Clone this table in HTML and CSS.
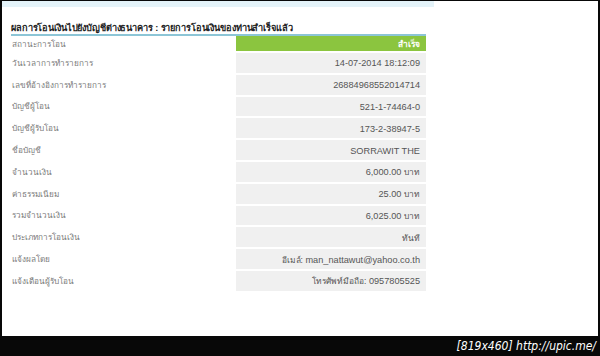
FILE: index.html
```html
<!DOCTYPE html>
<html lang="th">
<head>
<meta charset="utf-8">
<title>ผลการโอนเงิน</title>
<link rel="stylesheet" href="styles.css">
</head>
<body>
<div class="frame">
  <div class="screen">
    <div class="strip"></div>
    <div class="content">
      <h1 class="title">ผลการโอนเงินไปยังบัญชีต่างธนาคาร : รายการโอนเงินของท่านสำเร็จแล้ว</h1>
      <div class="table">
        <div class="label">สถานะการโอน</div><div class="value status">สำเร็จ</div>
        <div class="label">วันเวลาการทำรายการ</div><div class="value">14-07-2014 18:12:09</div>
        <div class="label">เลขที่อ้างอิงการทำรายการ</div><div class="value">26884968552014714</div>
        <div class="label">บัญชีผู้โอน</div><div class="value">521-1-74464-0</div>
        <div class="label">บัญชีผู้รับโอน</div><div class="value">173-2-38947-5</div>
        <div class="label">ชื่อบัญชี</div><div class="value">SORRAWIT THE</div>
        <div class="label">จำนวนเงิน</div><div class="value">6,000.00 <span class="th">บาท</span></div>
        <div class="label">ค่าธรรมเนียม</div><div class="value">25.00 <span class="th">บาท</span></div>
        <div class="label">รวมจำนวนเงิน</div><div class="value">6,025.00 <span class="th">บาท</span></div>
        <div class="label">ประเภทการโอนเงิน</div><div class="value th">ทันที</div>
        <div class="label">แจ้งผลโดย</div><div class="value"><span class="th">อีเมล์:</span>&nbsp;man_nattawut@yahoo.co.th</div>
        <div class="label">แจ้งเตือนผู้รับโอน</div><div class="value"><span class="th">โทรศัพท์มือถือ:</span>&nbsp;0957805525</div>
      </div>
    </div>
  </div>
  <div class="footer">[819x460] http://upic.me/</div>
</div>
</body>
</html>
```
FILE: styles.css
```css
html, body {
  margin: 0;
  padding: 0;
  background: #080808;
}
.frame {
  width: 600px;
  height: 356px;
  box-sizing: border-box;
  padding: 1px 2px 0 2px;
  display: flex;
  flex-direction: column;
  background: #080808;
}
.screen {
  flex: 1;
  background: #ffffff;
  display: flex;
  flex-direction: column;
}
.strip {
  width: 432px;
  height: 6px;
  background: #e4f3f9;
}
.content {
  padding-left: 9px;
}
.title {
  margin: 0;
  width: 415px;
  height: 29px;
  box-sizing: border-box;
  padding-top: 15px;
  border-bottom: 2px solid #8cc5d6;
  font-family: Tahoma, "Liberation Sans", "DejaVu Sans", sans-serif;
  font-size: 9.2px;
  letter-spacing: -0.12px;
  font-weight: bold;
  color: #222;
  line-height: 12px;
  white-space: nowrap;
}
.table {
  width: 415px;
  display: grid;
  grid-template-columns: 225px 190px;
  grid-template-rows: 15px repeat(11, 19.8px);
  row-gap: 2px;
  font-family: Tahoma, "Liberation Sans", "DejaVu Sans", sans-serif;
  font-size: 9.2px;
}
.label {
  display: flex;
  align-items: center;
  padding-left: 1px;
  padding-top: 1px;
  color: #7a7a7a;
  font-size: 8.2px;
}
.value {
  display: flex;
  align-items: center;
  justify-content: flex-end;
  padding-right: 6px;
  padding-top: 1px;
  background: #f0f0f0;
  color: #555;
  white-space: pre;
}
.th {
  font-size: 8.4px;
}
.value.status {
  background: #8bc53f;
  color: #fff;
  font-weight: bold;
  font-size: 8.4px;
}
.footer {
  height: 20px;
  display: flex;
  align-items: center;
  justify-content: flex-end;
  padding-right: 2px;
  color: #fff;
  font-family: "DejaVu Sans", sans-serif;
  font-stretch: condensed;
  font-size: 12px;
  font-style: italic;
}
```
